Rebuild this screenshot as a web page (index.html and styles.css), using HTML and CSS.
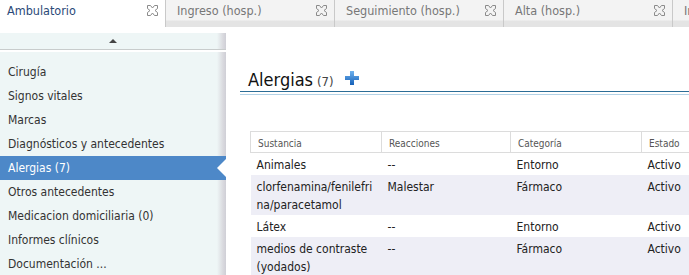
FILE: index.html
```html
<html>
<head>
  <link rel="stylesheet" href="styles.css">
</head>
<body>
  <div class="tabs">
    <div class="tab active">
      <span class="tab-label">Ambulatorio</span>
      <svg class="tab-close" width="11" height="11" viewBox="0 0 11 11"><polygon points="0.5,0.5 3.5,0.5 5.5,3 7.5,0.5 10.5,0.5 10.5,3.5 8,5.5 10.5,7.5 10.5,10.5 7.5,10.5 5.5,8 3.5,10.5 0.5,10.5 0.5,7.5 3,5.5 0.5,3.5" fill="none" stroke="#8a8a8a" stroke-width="1"/></svg>
    </div>
    <div class="tab">
      <span class="tab-label">Ingreso (hosp.)</span>
      <svg class="tab-close" width="11" height="11" viewBox="0 0 11 11"><polygon points="0.5,0.5 3.5,0.5 5.5,3 7.5,0.5 10.5,0.5 10.5,3.5 8,5.5 10.5,7.5 10.5,10.5 7.5,10.5 5.5,8 3.5,10.5 0.5,10.5 0.5,7.5 3,5.5 0.5,3.5" fill="none" stroke="#8a8a8a" stroke-width="1"/></svg>
    </div>
    <div class="tab">
      <span class="tab-label">Seguimiento (hosp.)</span>
      <svg class="tab-close" width="11" height="11" viewBox="0 0 11 11"><polygon points="0.5,0.5 3.5,0.5 5.5,3 7.5,0.5 10.5,0.5 10.5,3.5 8,5.5 10.5,7.5 10.5,10.5 7.5,10.5 5.5,8 3.5,10.5 0.5,10.5 0.5,7.5 3,5.5 0.5,3.5" fill="none" stroke="#8a8a8a" stroke-width="1"/></svg>
    </div>
    <div class="tab">
      <span class="tab-label">Alta (hosp.)</span>
      <svg class="tab-close" width="11" height="11" viewBox="0 0 11 11"><polygon points="0.5,0.5 3.5,0.5 5.5,3 7.5,0.5 10.5,0.5 10.5,3.5 8,5.5 10.5,7.5 10.5,10.5 7.5,10.5 5.5,8 3.5,10.5 0.5,10.5 0.5,7.5 3,5.5 0.5,3.5" fill="none" stroke="#8a8a8a" stroke-width="1"/></svg>
    </div>
    <div class="tab">
      <span class="tab-label">Informes</span>
    </div>
  </div>

  <div class="layout">
    <!-- menu lateral -->
    <div class="side">
      <div class="scroll-up"><span class="up-arrow"></span></div>
      <ul class="nav">
        <li>Cirugía</li>
        <li>Signos vitales</li>
        <li>Marcas</li>
        <li>Diagnósticos y antecedentes</li>
        <li class="selected">Alergias (7)</li>
        <li>Otros antecedentes</li>
        <li>Medicacion domiciliaria (0)</li>
        <li>Informes clínicos</li>
        <li>Documentación ...</li>
      </ul>
    </div>

    <!-- contenido -->
    <div class="content">
      <div class="title">
        <span class="title-text">Alergias</span>
        <span class="title-count">(7)</span>
        <svg class="add" width="14" height="14" viewBox="0 0 14 14">
          <defs>
            <linearGradient id="plusGrad" x1="0" y1="0" x2="0" y2="1">
              <stop offset="0" stop-color="#6fb2ee"/>
              <stop offset="1" stop-color="#1560b8"/>
            </linearGradient>
          </defs>
          <path d="M5 0h4v5h5v4h-5v5h-4v-5h-5v-4h5z" fill="url(#plusGrad)"/>
        </svg>
      </div>
      <div class="title-rule"></div>

      <table class="grid">
        <colgroup>
          <col class="c1"><col class="c2"><col class="c3"><col class="c4">
        </colgroup>
        <thead>
          <tr><th>Sustancia</th><th>Reacciones</th><th>Categoría</th><th>Estado</th></tr>
        </thead>
        <tbody>
          <tr><td>Animales</td><td>--</td><td>Entorno</td><td>Activo</td></tr>
          <tr class="alt"><td>clorfenamina/fenilefri<br>na/paracetamol</td><td>Malestar</td><td>Fármaco</td><td>Activo</td></tr>
          <tr><td>Látex</td><td>--</td><td>Entorno</td><td>Activo</td></tr>
          <tr class="alt"><td>medios de contraste (yodados)</td><td>--</td><td>Fármaco</td><td>Activo</td></tr>
        </tbody>
      </table>
    </div>
  </div>
</body>
</html>
```

FILE: styles.css
```css
/* general */
body {
  margin: 0;
  width: 689px;
  height: 275px;
  overflow: hidden;
  background: #fff;
  font-family: "DejaVu Sans Condensed", "Liberation Sans", sans-serif;
  font-size: 12px;
  color: #222;
}

/* pestañas */
.tabs {
  display: flex;
  height: 27px;
  white-space: nowrap;
}

.tab {
  flex: none;
  display: flex;
  align-items: flex-start;
  justify-content: space-between;
  width: 169px;
  box-sizing: border-box;
  padding: 4px 7px 0 11px;
  border-right: 1px solid #c9c9c9;
  background: linear-gradient(#f3f3f3 0, #f3f3f3 74%, #e4e4e4 78%, #e4e4e4 100%);
  color: #777;
  font-size: 12.5px;
}

.tab.active {
  width: 166px;
  padding-left: 7px;
  background: #fff;
  color: #2b4a78;
}

.tab-label {
  line-height: 14px;
}

.tab-close {
  margin-top: 1px;
}

/* cuerpo */
.layout {
  display: flex;
  margin-top: 6px;
}

/* menu lateral */
.side {
  flex: none;
  width: 226px;
}

.scroll-up {
  display: flex;
  justify-content: center;
  align-items: center;
  height: 16px;
  background: linear-gradient(to right, #eef6f6 0, #eef6f6 217px, #d9d9de 223px, #cfcfd6 226px);
  border-bottom: 1px solid #c8cccc;
}

.up-arrow {
  width: 0;
  height: 0;
  border-left: 4px solid transparent;
  border-right: 4px solid transparent;
  border-bottom: 4px solid #444;
}

.nav {
  list-style: none;
  margin: 2px 0 0 0;
  padding: 8px 0 0 0;
  height: 300px;
  background: linear-gradient(to right, #eef6f6 0, #eef6f6 217px, #d9d9de 223px, #cfcfd6 226px);
}

.nav li {
  position: relative;
  height: 24px;
  line-height: 24px;
  padding-left: 8px;
  color: #333;
}

.nav li.selected {
  background: #4d88c8;
  color: #fff;
}

/* muesca blanca del elemento seleccionado */
.nav li.selected::after {
  content: "";
  position: absolute;
  right: 0;
  top: 3px;
  border-top: 9px solid transparent;
  border-bottom: 9px solid transparent;
  border-right: 9px solid #fff;
}

/* contenido */
.content {
  flex: 1;
  margin-left: 14px;
}

.title {
  display: flex;
  align-items: baseline;
  margin-top: 36px;
  padding-left: 8px;
  height: 22px;
  border-bottom: 1px solid #2c6d96;
}

.title-text {
  font-size: 18px;
  color: #111;
}

.title-count {
  margin-left: 4px;
  font-size: 13px;
  color: #444;
}

.add {
  margin-left: 11px;
  align-self: flex-start;
  margin-top: 2px;
}

.title-rule {
  margin-top: 2px;
  height: 1px;
  background: #b3d2e6;
}

/* tabla */
.grid {
  margin: 36px 0 0 10px;
  width: 520px;
  table-layout: fixed;
  border-collapse: collapse;
  font-family: inherit;
  font-size: 12px;
}

.grid col.c1 { width: 131px; }
.grid col.c2 { width: 129px; }
.grid col.c3 { width: 131px; }
.grid col.c4 { width: 129px; }

.grid th {
  height: 21px;
  padding: 3px 6px 0 7px;
  border: 1px solid #dcdcdc;
  text-align: left;
  font-weight: normal;
  font-size: 10px;
  color: #555;
}

.grid td {
  padding: 3px 6px 1px 6px;
  line-height: 18px;
  vertical-align: top;
  color: #222;
}

.grid tr.alt td {
  background: #eeeef6;
}
```
